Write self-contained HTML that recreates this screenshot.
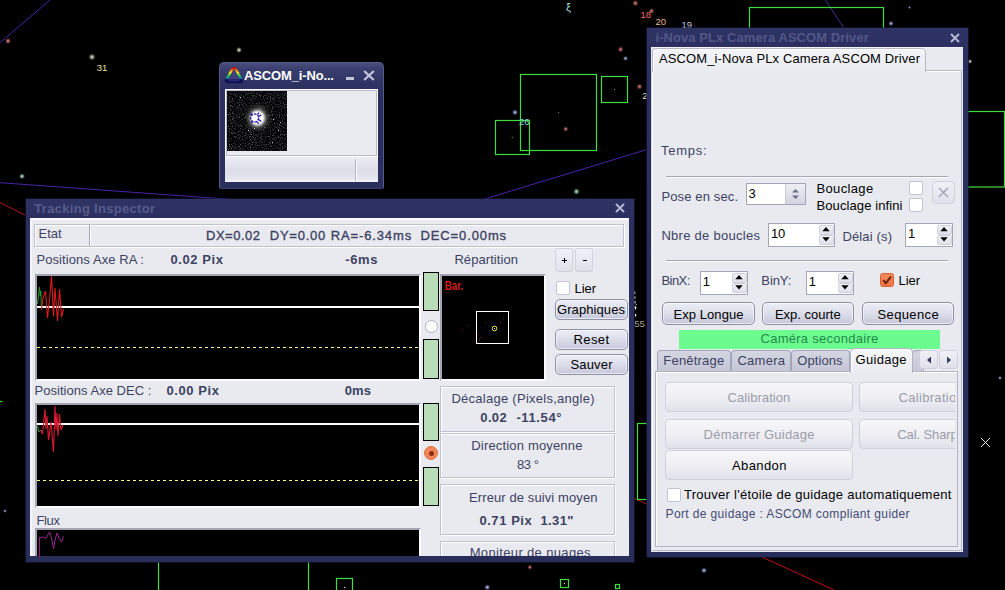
<!DOCTYPE html>
<html><head><meta charset="utf-8"><title>Tracking</title>
<style>
html,body{margin:0;padding:0;background:#000;}
body{width:1005px;height:590px;overflow:hidden;position:relative;font-family:"Liberation Sans",sans-serif;font-size:13px;line-height:13px;}
#root{position:absolute;left:0;top:0;width:1005px;height:590px;overflow:hidden;background:#000;}
#root div,#root svg{position:absolute;box-sizing:border-box;}
.t{white-space:nowrap;font-size:13px;line-height:13px;}
.win{background:#2b2f5e;box-shadow:0 0 0 1px rgba(26,28,66,.55);}
.cont{background:#e8eaf0;}
.blk{background:#000;}
.gbar{background:#b9dcb9;border:1px solid #000;}
.btn{border:1px solid #8e90a6;border-radius:5px;background:linear-gradient(#eceef6,#d9dbe8 55%,#c6c8da);box-shadow:inset 0 0 0 1px rgba(255,255,255,.6);}
.btnd{border:1px solid #cfd0da;border-radius:4px;background:linear-gradient(#f7f7fa,#ededf2 60%,#e0e1e9);}
.sbtn{border:1px solid #cfd1dd;border-radius:3px;background:linear-gradient(#f0f1f6,#dfe0ea);}
.chk{background:#fff;border:1px solid #c2c4d2;border-radius:2px;}
.inp{background:#fff;border:1px solid #a3a5b8;}
.grp{border:1px solid #bfc1cd;box-shadow:inset 1px 1px 0 #fff, 1px 1px 0 #fff;}
.sep{height:2px;border-top:1px solid #a2a5b6;border-bottom:1px solid #fff;}
.tab{border:1px solid #a3a5ba;border-bottom:none;border-radius:4px 4px 0 0;background:linear-gradient(#d4d6e2,#c4c6d6);}

</style></head>
<body>
<div id="root">
<!-- ============ star chart background ============ -->
<svg id="bg" width="1005" height="590" viewBox="0 0 1005 590" style="left:0;top:0">
 <defs>
  <radialGradient id="sW"><stop offset="0" stop-color="#bcbcb2"/><stop offset=".18" stop-color="#bcbcb2"/><stop offset=".45" stop-color="#66665e"/><stop offset=".72" stop-color="#242420" stop-opacity=".6"/><stop offset="1" stop-color="#000" stop-opacity="0"/></radialGradient>
  <radialGradient id="sR"><stop offset="0" stop-color="#b86a6a"/><stop offset=".18" stop-color="#b86a6a"/><stop offset=".45" stop-color="#623636"/><stop offset=".72" stop-color="#241212" stop-opacity=".6"/><stop offset="1" stop-color="#000" stop-opacity="0"/></radialGradient>
  <radialGradient id="sB"><stop offset="0" stop-color="#a0a4c8"/><stop offset=".18" stop-color="#a0a4c8"/><stop offset=".45" stop-color="#505474"/><stop offset=".72" stop-color="#1c1e30" stop-opacity=".6"/><stop offset="1" stop-color="#000" stop-opacity="0"/></radialGradient>
  <radialGradient id="sG"><stop offset="0" stop-color="#a4c4b0"/><stop offset=".18" stop-color="#a4c4b0"/><stop offset=".45" stop-color="#4c6e5c"/><stop offset=".72" stop-color="#1a2820" stop-opacity=".6"/><stop offset="1" stop-color="#000" stop-opacity="0"/></radialGradient>
 </defs>
 <g fill="none" stroke-width="1">
  <line x1="0" y1="42.6" x2="50" y2="0" stroke="#4a22a8"/>
  <line x1="0" y1="182.7" x2="420" y2="213" stroke="#4a22a8"/>
  <line x1="430" y1="215.7" x2="646" y2="149.8" stroke="#4a22a8"/>
  <line x1="825.4" y1="0" x2="843.3" y2="27" stroke="#4a2a90"/>
  <line x1="0" y1="202.6" x2="25" y2="215" stroke="#b01818"/>
  <line x1="600" y1="482.6" x2="834" y2="590" stroke="#c01010"/>
 </g>
 <g fill="none" stroke="#3fdc3f" stroke-width="1.2">
  <rect x="520.5" y="74.5" width="76" height="76"/>
  <rect x="601.5" y="76.5" width="26" height="26"/>
  <rect x="495.5" y="120.5" width="34" height="34"/>
  <rect x="749.5" y="7.5" width="134" height="60"/>
  <rect x="960.5" y="111.5" width="44" height="75.5"/>
  <rect x="637.5" y="423.5" width="60" height="76"/>
  <line x1="0" y1="401.5" x2="2.5" y2="401.5"/>
  <line x1="158.5" y1="560" x2="158.5" y2="590"/>
  <line x1="308.5" y1="560" x2="308.5" y2="590"/>
  <rect x="336.5" y="578.5" width="16" height="16"/>
  <rect x="560.5" y="579.5" width="8" height="8"/>
  <rect x="615.5" y="584.5" width="4" height="4"/>
 </g>
 <!-- stars -->
 <circle cx="8" cy="41" r="3.9" fill="url(#sR)"/>
 <circle cx="92" cy="57" r="4.3" fill="url(#sW)"/>
 <circle cx="239" cy="50" r="3.7" fill="url(#sW)"/>
 <circle cx="22" cy="176.3" r="3.7" fill="url(#sG)"/>
 <circle cx="635.4" cy="3.2" r="3.9" fill="url(#sR)"/>
 <circle cx="651.5" cy="11" r="3.7" fill="url(#sR)"/>
 <circle cx="620.6" cy="49.4" r="3.7" fill="url(#sR)"/>
 <circle cx="625.5" cy="58.4" r="3.1" fill="url(#sB)"/>
 <circle cx="639.5" cy="86.6" r="3.7" fill="url(#sR)"/>
 <circle cx="515" cy="112.4" r="3.7" fill="url(#sB)"/>
 <circle cx="565.7" cy="129" r="3.3" fill="url(#sR)"/>
 <circle cx="576.5" cy="191.5" r="4.1" fill="url(#sG)"/>
 <circle cx="891" cy="23.5" r="3.3" fill="url(#sB)"/>
 <circle cx="970" cy="61.4" r="2.9" fill="url(#sW)"/>
 <circle cx="529.8" cy="567.2" r="3.1" fill="url(#sR)"/>
 <circle cx="487.3" cy="587.3" r="3.7" fill="url(#sB)"/>
 <circle cx="704" cy="570.4" r="3.7" fill="url(#sB)"/>
 <circle cx="1000" cy="378" r="2.4" fill="url(#sB)"/>
 <circle cx="5" cy="511" r="2.2" fill="url(#sB)"/>
 <circle cx="909.5" cy="7.5" r="1.8" fill="url(#sB)"/>
 <circle cx="564.5" cy="583.5" r=".7" fill="#ddd"/>
 <circle cx="344.5" cy="587.5" r=".7" fill="#ddd"/>
 <circle cx="558.6" cy="112.5" r=".6" fill="#7a7"/>
 <circle cx="512.2" cy="137.3" r=".6" fill="#7a7"/>
 <circle cx="614.5" cy="89.5" r=".6" fill="#aaa"/>
 <g font-family="Liberation Sans, sans-serif" font-size="9.5">
  <text x="96.8" y="71" fill="#e0e09a">31</text>
  <text x="640.5" y="17.5" fill="#f06868">18</text>
  <text x="655.5" y="25" fill="#e8b49a">20</text>
  <text x="681.5" y="27.5" fill="#c4c4ee">19</text>
  <text x="519" y="125" fill="#86d6d6">26</text>
  <text x="566" y="11" fill="#a6e2e2" font-size="11">ξ</text>
  <text x="642.3" y="99" fill="#e8d8c0">2</text>
  <text x="634.3" y="327" fill="#aaa292">55</text>
 </g>
 <path d="M634.6 291.5 L635.2 310 L636.4 304 M635.6 314 L635.6 316.5" fill="none" stroke="#fff" stroke-width="1.2" stroke-dasharray="2.4 2.4"/>
 <path d="M981 438 l9 9 m0 -9 l-9 9" stroke="#e4e4e4" stroke-width="1" fill="none"/>
</svg>

<!-- ============ small ASCOM preview window ============ -->
<div id="sw" style="left:219px;top:62px;width:165px;height:127px;border-radius:5px 5px 2px 2px;background:linear-gradient(#4a4f80 0,#3a3f70 6px,#2e3263 22px,#2b2f5e 30px);border:1px solid #565b8a;border-bottom-color:#3a3e6c;">
 <!-- icon -->
 <svg width="22" height="20" viewBox="0 0 22 20" style="left:2.5px;top:2.7px">
  <defs><linearGradient id="rb" gradientUnits="userSpaceOnUse" x1="0" y1="14" x2="0" y2="1"><stop offset="0" stop-color="#1c2c9c"/><stop offset=".14" stop-color="#1488a8"/><stop offset=".34" stop-color="#22c444"/><stop offset=".56" stop-color="#ece424"/><stop offset=".74" stop-color="#f48a14"/><stop offset=".9" stop-color="#d41414"/><stop offset="1" stop-color="#b40a0a"/></linearGradient></defs>
  <path d="M5.8 13.4 L11 4.4 L16.2 13.4 Z" fill="#5a4aa0" fill-opacity=".4"/>
  <path d="M3.6 13.6 L9.2 3.2 Q11 0.9 12.8 3.2 L18.4 13.6" fill="none" stroke="url(#rb)" stroke-width="2.5" stroke-linejoin="round"/>
  <path d="M1.3 13.3 L20.7 13.3 L19.2 17.3 L2.8 17.3 Z" fill="#0e1254"/>
  <path d="M5.2 13.3 L16.8 13.3 L16.2 15.3 L5.8 15.3 Z" fill="#3a2e86" fill-opacity=".75"/>
 </svg>
 <!-- min / close -->
 <div style="left:126px;top:14px;width:8px;height:3px;background:#c4c6de;"></div>
 <svg width="12" height="11" viewBox="0 0 12 11" style="left:143px;top:7px"><path d="M1.2 1 L10.8 10 M10.8 1 L1.2 10" stroke="#c4c6de" stroke-width="2.2" fill="none"/></svg>
 <!-- image panel -->
 <div style="left:5px;top:26px;width:153px;height:68px;background:#e9ebf0;border:1px solid #fff;box-shadow:inset 0 0 0 1px #b9bbd0;"></div>
 <svg width="60" height="60" viewBox="0 0 60 60" style="left:7px;top:28px">
  <defs>
   <filter id="nz" x="0" y="0" width="100%" height="100%" color-interpolation-filters="sRGB"><feTurbulence type="fractalNoise" baseFrequency="0.9" numOctaves="2" seed="7"/><feColorMatrix type="matrix" values="1.2 0 0 0 -0.585  1.2 0 0 0 -0.585  1.2 0 0 0 -0.575  0 0 0 0 1"/></filter>
   <radialGradient id="glow"><stop offset="0" stop-color="#fff"/><stop offset=".31" stop-color="#fff"/><stop offset=".4" stop-color="#d0d0d0" stop-opacity=".9"/><stop offset=".52" stop-color="#777" stop-opacity=".6"/><stop offset=".7" stop-color="#3a3a3a" stop-opacity=".35"/><stop offset="1" stop-color="#000" stop-opacity="0"/></radialGradient>
  </defs>
  <rect width="60" height="60" fill="#060606"/>
  <rect width="60" height="60" filter="url(#nz)"/>
  <ellipse cx="30.5" cy="27" rx="17" ry="18" fill="url(#glow)"/>
  <g fill="#ccc"><rect x="13" y="6" width="1" height="1"/><rect x="21" y="39" width="1" height="1"/><rect x="27" y="37" width="1" height="1"/><rect x="53" y="31" width="1" height="1"/><rect x="51" y="39" width="1" height="1"/><rect x="46" y="28" width="1" height="1"/><rect x="45" y="51" width="1" height="1"/></g>
  <g stroke="#2414a8" stroke-width="1.3" fill="none">
   <circle cx="27.6" cy="27" r="4" stroke-dasharray="2.4 1.2"/>
   <path d="M25 24 l-1.6 -1.8 M30.4 23.6 l1.6 -2 M31.6 28.5 l2.6 2 M31.6 25.5 l2.6 -1.6 M25.4 30.4 l-1.4 1.6 M30 30.6 l1.6 2.4"/>
  </g>
 </svg>
 <!-- status bar -->
 <div style="left:5px;top:94px;width:153px;height:25px;background:linear-gradient(#edeef4,#dcdde7 55%,#e4e5ed 85%,#f3f3f8);"></div>
 <div style="left:135px;top:96px;width:1px;height:22px;background:#b4b6c6;"></div>
 <div style="left:136px;top:96px;width:1px;height:22px;background:#f8f8fc;"></div>
</div>

<!-- ============ Tracking Inspector window ============ -->
<div id="ti" class="win" style="left:26px;top:199px;width:608px;height:363px;background:linear-gradient(#2e3364,#2c3060 19px,#292d5a);">
 <svg width="10" height="10" viewBox="0 0 10 10" style="left:589px;top:4px"><path d="M1 1 L9 9 M9 1 L1 9" stroke="#b4b6d2" stroke-width="2" fill="none"/></svg>
 <div class="cont" style="left:4px;top:19px;width:599px;height:338px;border-top:2px solid #fafafc;border-left:2px solid #f6f6fa;overflow:hidden;">
  <!-- coordinates inside: origin (32,220) -->
 </div>
 <!-- origin (26,199) -->
 <div class="grp" style="left:8px;top:25px;width:590px;height:23px;"></div>
 <div style="left:63px;top:26px;width:1px;height:21px;background:#a4a7b8;"></div>
 <div style="left:64px;top:26px;width:1px;height:21px;background:#fff;"></div>

 <!-- RA graph -->
 <div style="left:9px;top:75px;width:386px;height:107px;background:#000;border:2px solid #a2a4b2;border-right:2px solid #fbfbfd;border-bottom:2px solid #fbfbfd;"></div>
 <svg width="382" height="104" viewBox="37 276 382 104" style="left:11px;top:77px">
  <rect x="37" y="306" width="382" height="2" fill="#fff"/>
  <polyline points="37.5,304 39.5,287 40.3,296 40.8,291 41.3,306" fill="none" stroke="#2a9a3a" stroke-width="1"/>
  <polyline points="41.5,310 43,298 45.5,291 47.5,318 49.5,300 51.5,276 53.5,316 55,288 57.5,321 59.5,289 61,310 61.5,317 63.5,309" fill="none" stroke="#dc1a1a" stroke-width="1.1"/>
  <line x1="37" y1="347.5" x2="419" y2="347.5" stroke="#ffff88" stroke-width="1" stroke-dasharray="3 3"/>
 </svg>
 <!-- bars + radio RA -->
 <div class="gbar" style="left:397px;top:73px;width:16px;height:39px;"></div>
 <div class="gbar" style="left:397px;top:140px;width:16px;height:40px;"></div>
 <div style="left:398.5px;top:120.5px;width:13px;height:13px;border-radius:50%;background:#fff;border:1px solid #b4b4c4;"></div>
 <!-- repartition -->
 <div style="left:414px;top:75px;width:106px;height:107px;background:#000;border:2px solid #a2a4b2;border-right:2px solid #fbfbfd;border-bottom:2px solid #fbfbfd;"></div>
 <svg width="103" height="104" viewBox="442 276 103 104" style="left:416px;top:77px">
  <rect x="476.5" y="311.5" width="32" height="32" fill="none" stroke="#fff" stroke-width="1"/>
  <circle cx="494.5" cy="328.5" r="2.3" fill="none" stroke="#e8e860" stroke-width="1"/>
  <rect x="494" y="328" width="1" height="1" fill="#e8e860"/>
  <g fill="#7a1818"><rect x="468" y="325" width="1" height="1"/><rect x="485" y="322" width="1" height="1"/><rect x="480" y="337" width="1" height="1"/><rect x="478" y="334" width="1" height="1"/><rect x="462" y="329" width="1" height="1"/><rect x="503" y="318" width="1" height="1"/><rect x="500" y="322" width="1" height="1"/><rect x="479" y="339" width="1" height="1"/></g>
 </svg>
 <div class="t" style="left:419px;top:80.7px;color:#e01818;font-weight:bold;font-size:12px;transform:scaleX(.82);transform-origin:0 0;">Bar.</div>
 <!-- + - buttons -->
 <div class="sbtn" style="left:529px;top:49px;width:18px;height:24px;"></div>
 <div class="sbtn" style="left:549px;top:49px;width:18px;height:24px;"></div>
 <div style="left:536px;top:61px;width:5px;height:1px;background:#000;"></div>
 <div style="left:538px;top:59px;width:1px;height:5px;background:#000;"></div>
 <div style="left:557px;top:61px;width:4px;height:1px;background:#000;"></div>
 <div class="chk" style="left:530px;top:82px;width:14px;height:14px;"></div>
 <div class="btn" style="left:529px;top:100px;width:73px;height:21px;"></div>
 <div class="btn" style="left:529px;top:130px;width:73px;height:21px;"></div>
 <div class="btn" style="left:529px;top:155px;width:73px;height:21px;"></div>

 <!-- DEC graph -->
 <div style="left:9px;top:204px;width:386px;height:105px;background:#000;border:2px solid #a2a4b2;border-right:2px solid #fbfbfd;border-bottom:2px solid #fbfbfd;"></div>
 <svg width="382" height="102" viewBox="37 405 382 102" style="left:11px;top:206px">
  <rect x="37" y="423" width="382" height="2" fill="#fff"/>
  <polyline points="37.5,426 39,432 41,430" fill="none" stroke="#2a9a3a" stroke-width="1"/>
  <polyline points="41,430 42.5,434 45,409 46,429 47,416 48.5,440 51,422 53.5,452 55,406 56,430 57,413 58,436 59.5,414 61,430 63,425" fill="none" stroke="#dc1a30" stroke-width="1.1"/>
  <line x1="37" y1="480.5" x2="419" y2="480.5" stroke="#ffff88" stroke-width="1" stroke-dasharray="3 3"/>
 </svg>
 <div class="gbar" style="left:397px;top:204px;width:16px;height:38px;"></div>
 <div class="gbar" style="left:397px;top:268px;width:16px;height:39px;"></div>
 <div style="left:398px;top:247px;width:14px;height:14px;border-radius:50%;background:#f0845a;border:1px solid #e0703c;"></div>
 <div style="left:402.5px;top:251.5px;width:5px;height:5px;border-radius:50%;background:#8a2c10;"></div>

 <!-- info boxes -->
 <div class="grp" style="left:414px;top:187px;width:175px;height:46px;"></div>
 <div class="grp" style="left:414px;top:234px;width:175px;height:45px;"></div>
 <div class="grp" style="left:414px;top:285px;width:175px;height:51px;"></div>
 <div style="left:414px;top:342px;width:176px;height:15px;overflow:hidden;">
  <div class="grp" style="left:0;top:0;width:175px;height:40px;"></div>
  <div class="t" id="moni" style="left:29.7px;top:5px;color:#3e4262;letter-spacing:.35px;">Moniteur de nuages</div>
 </div>

 <!-- Flux graph -->
 <div style="left:9px;top:329px;width:386px;height:28px;background:#000;border:2px solid #a2a4b2;border-right:2px solid #fbfbfd;border-bottom:none;"></div>
 <svg width="382" height="32" viewBox="37 530 382 32" style="left:11px;top:331px;height:27px" preserveAspectRatio="xMinYMin slice">
  <polyline points="39.3,560 39.5,537.5 43,537 46,538.5 49.5,532 51.5,538 53.5,549 55,540 57,533 59,538 61.5,542 63.5,536.5" fill="none" stroke="#98248e" stroke-width="1"/>
 </svg>
</div>

<!-- ============ i-Nova camera window ============ -->
<div id="rw" class="win" style="left:647px;top:28px;width:321px;height:529px;background:linear-gradient(#2e3364,#2c3060 19px,#292d5a);">
 <!-- origin (647,28) -->
 <svg width="10" height="10" viewBox="0 0 10 10" style="left:302.5px;top:4.5px"><path d="M1 1 L9 9 M9 1 L1 9" stroke="#b4b6d2" stroke-width="2" fill="none"/></svg>
 <div class="cont" style="left:4px;top:19px;width:312px;height:505px;border-top:1px solid #f4f4f8;"></div>
 <!-- outer tab page -->
 <div style="left:4px;top:42px;width:311px;height:481px;border:1px solid #b6b8c8;border-left-color:#d4d6e0;box-shadow:inset 1px 1px 0 #fff;background:#e8eaf0;"></div>
 <div style="left:5px;top:20px;width:274px;height:24px;border:1px solid #b6b8c8;border-bottom:none;border-radius:4px 5px 0 0;background:linear-gradient(#f4f5f9,#e9ebf1);box-shadow:inset 1px 1px 0 #fff;"></div>

 <div class="sep" style="left:19px;top:148px;width:282px;"></div>
 <!-- pose -->
 <div class="inp" style="left:99px;top:155px;width:60px;height:22px;"></div>
 <div style="left:138px;top:156px;width:20px;height:20px;background:linear-gradient(#eeeff5,#d2d4e2);border-left:1px solid #c9cbd8;"></div>
 <svg width="9" height="12" viewBox="0 0 9 12" style="left:144px;top:160px"><path d="M1 4.5 L4.5 1 L8 4.5 Z M1 7.5 L4.5 11 L8 7.5 Z" fill="#6c6f86"/></svg>
 <div class="chk" style="left:262px;top:153px;width:14px;height:14px;"></div>
 <div class="chk" style="left:262px;top:170px;width:14px;height:14px;"></div>
 <div class="sbtn" style="left:285px;top:153px;width:23px;height:23px;border-radius:4px;"></div>
 <svg width="11" height="11" viewBox="0 0 11 11" style="left:291px;top:159px"><path d="M1 1 L10 10 M10 1 L1 10" stroke="#9a9cb0" stroke-width="1.1" fill="none"/></svg>
 <!-- nbre -->
 <div class="inp" style="left:121px;top:195px;width:67px;height:24px;"></div>
 <div class="sbtn" style="left:172px;top:197px;width:15px;height:10px;border-radius:2px;"></div>
 <div class="sbtn" style="left:172px;top:207px;width:15px;height:10px;border-radius:2px;"></div>
 <svg width="8" height="15" viewBox="0 0 8 15" style="left:174.5px;top:199.0px"><path d="M0.3 4.3 L4 0.1 L7.7 4.3 Z M0.3 10.2 L4 14.4 L7.7 10.2 Z" fill="#000"/></svg>
 <div class="inp" style="left:258px;top:195px;width:48px;height:24px;"></div>
 <div class="sbtn" style="left:290px;top:197px;width:15px;height:10px;border-radius:2px;"></div>
 <div class="sbtn" style="left:290px;top:207px;width:15px;height:10px;border-radius:2px;"></div>
 <svg width="8" height="15" viewBox="0 0 8 15" style="left:292.5px;top:199.0px"><path d="M0.3 4.3 L4 0.1 L7.7 4.3 Z M0.3 10.2 L4 14.4 L7.7 10.2 Z" fill="#000"/></svg>
 <div class="sep" style="left:19px;top:232px;width:282px;"></div>
 <!-- bin -->
 <div class="inp" style="left:53px;top:243px;width:48px;height:24px;"></div>
 <div class="sbtn" style="left:85px;top:245px;width:15px;height:10px;border-radius:2px;"></div>
 <div class="sbtn" style="left:85px;top:255px;width:15px;height:10px;border-radius:2px;"></div>
 <svg width="8" height="15" viewBox="0 0 8 15" style="left:87.5px;top:247.0px"><path d="M0.3 4.3 L4 0.1 L7.7 4.3 Z M0.3 10.2 L4 14.4 L7.7 10.2 Z" fill="#000"/></svg>
 <div class="inp" style="left:159px;top:243px;width:48px;height:24px;"></div>
 <div class="sbtn" style="left:191px;top:245px;width:15px;height:10px;border-radius:2px;"></div>
 <div class="sbtn" style="left:191px;top:255px;width:15px;height:10px;border-radius:2px;"></div>
 <svg width="8" height="15" viewBox="0 0 8 15" style="left:193.5px;top:247.0px"><path d="M0.3 4.3 L4 0.1 L7.7 4.3 Z M0.3 10.2 L4 14.4 L7.7 10.2 Z" fill="#000"/></svg>
 <div style="left:233px;top:245px;width:14px;height:14px;border-radius:2.5px;background:linear-gradient(#f48a5e,#ee7446);border:1px solid #d8622e;"></div>
 <svg width="12" height="12" viewBox="0 0 12 12" style="left:234px;top:246px"><path d="M2.2 6.2 L4.8 9.2 L10 2.6" stroke="#6a2408" stroke-width="2" fill="none"/></svg>
 <!-- buttons -->
 <div class="btn" style="left:14.5px;top:274px;width:93px;height:23px;"></div>
 <div class="btn" style="left:115px;top:274px;width:92px;height:23px;"></div>
 <div class="btn" style="left:215px;top:274px;width:92px;height:23px;"></div>
 <div style="left:32px;top:302px;width:261px;height:19px;background:#6cfb8e;"></div>
 <!-- inner tabs -->
 <div class="tab" style="left:10px;top:322px;width:74px;height:22px;"></div>
 <div class="tab" style="left:84px;top:322px;width:60px;height:22px;"></div>
 <div class="tab" style="left:144px;top:322px;width:59px;height:22px;"></div>
 <div class="tab" style="left:265px;top:322px;width:12px;height:22px;"></div>
 <div style="left:8px;top:343px;width:303px;height:176px;border:1px solid #b2b4c6;box-shadow:inset 1px 1px 0 #fff;background:#e8eaf0;"></div>
 <div style="left:203px;top:320px;width:63px;height:25px;border:1px solid #b2b4c6;border-bottom:none;border-radius:5px 5px 0 0;background:linear-gradient(#f6f7fa,#e9ebf1);box-shadow:inset 1px 1px 0 #fff;"></div>
 <div class="sbtn" style="left:272px;top:322px;width:19px;height:19px;"></div>
 <div class="sbtn" style="left:292px;top:322px;width:19px;height:19px;"></div>
 <svg width="6" height="8" viewBox="0 0 6 8" style="left:279px;top:328px"><path d="M5 0.5 L1 4 L5 7.5 Z" fill="#34385a"/></svg>
 <svg width="6" height="8" viewBox="0 0 6 8" style="left:299px;top:328px"><path d="M1 0.5 L5 4 L1 7.5 Z" fill="#34385a"/></svg>
 <!-- inner panel content, clipped at x=955 -->
 <div style="left:10px;top:346px;width:298px;height:170px;overflow:hidden;">
  <!-- origin (657,374) -->
  <div class="btnd" style="left:8px;top:7.5px;width:188px;height:30px;"></div>
  <div class="btnd" style="left:202px;top:7.5px;width:188px;height:30px;"></div>
  <div class="btnd" style="left:8px;top:44.5px;width:188px;height:30px;"></div>
  <div class="btnd" style="left:202px;top:44.5px;width:188px;height:30px;"></div>
  <div class="btnd" style="left:8px;top:76px;width:188px;height:30px;"></div>
  <div class="chk" style="left:9.5px;top:113.5px;width:14px;height:14px;"></div>
  <div class="t" style="left:241.6px;top:17px;color:#9a9caa;letter-spacing:.3px;">Calibration</div>
  <div class="t" style="left:240.3px;top:54px;color:#9a9caa;letter-spacing:-.1px;">Cal. Sharp</div>
 </div>
</div>

<div class="t" style="left:244.0px;top:69.0px;color:#ffffff;font-weight:bold;letter-spacing:-0.145px;">ASCOM_i-No...</div>
<div class="t" style="left:34.3px;top:202.0px;color:#565c8c;font-weight:bold;letter-spacing:0.300px;">Tracking Inspector</div>
<div class="t" style="left:38.5px;top:227.0px;color:#3e4262;">Etat</div>
<div class="t" style="left:206.0px;top:229.0px;color:#3e4262;letter-spacing:0.508px;-webkit-text-stroke:0.35px #3e4262;">DX=0.02</div>
<div class="t" style="left:269.8px;top:229.0px;color:#3e4262;letter-spacing:0.758px;-webkit-text-stroke:0.35px #3e4262;">DY=0.00</div>
<div class="t" style="left:330.7px;top:229.0px;color:#3e4262;letter-spacing:0.875px;-webkit-text-stroke:0.35px #3e4262;">RA=-6.34ms</div>
<div class="t" style="left:420.5px;top:229.0px;color:#3e4262;letter-spacing:0.881px;-webkit-text-stroke:0.35px #3e4262;">DEC=0.00ms</div>
<div class="t" style="left:36.5px;top:253.0px;color:#3e4262;letter-spacing:0.074px;">Positions Axe RA :</div>
<div class="t" style="left:170.5px;top:253.0px;color:#3e4262;font-weight:bold;letter-spacing:0.580px;">0.02 Pix</div>
<div class="t" style="left:345.3px;top:253.0px;color:#3e4262;font-weight:bold;letter-spacing:0.580px;">-6ms</div>
<div class="t" style="left:454.4px;top:253.0px;color:#3e4262;letter-spacing:0.073px;">Répartition</div>
<div class="t" style="left:574.5px;top:282.0px;color:#000;">Lier</div>
<div class="t" style="left:557.0px;top:303.0px;color:#000;letter-spacing:0.087px;">Graphiques</div>
<div class="t" style="left:573.5px;top:333.0px;color:#000;letter-spacing:0.383px;">Reset</div>
<div class="t" style="left:570.5px;top:358.0px;color:#000;letter-spacing:0.159px;">Sauver</div>
<div class="t" style="left:34.5px;top:384.0px;color:#3e4262;letter-spacing:0.032px;">Positions Axe DEC :</div>
<div class="t" style="left:166.5px;top:384.0px;color:#3e4262;font-weight:bold;letter-spacing:0.580px;">0.00 Pix</div>
<div class="t" style="left:344.8px;top:384.0px;color:#3e4262;font-weight:bold;letter-spacing:0.034px;">0ms</div>
<div class="t" style="left:451.4px;top:392.0px;color:#3e4262;letter-spacing:0.268px;">Décalage (Pixels,angle)</div>
<div class="t" style="left:480.3px;top:411.0px;color:#3e4262;font-weight:bold;letter-spacing:0.362px;">0.02</div>
<div class="t" style="left:516.4px;top:411.0px;color:#3e4262;font-weight:bold;letter-spacing:0.626px;">-11.54°</div>
<div class="t" style="left:471.3px;top:439.0px;color:#3e4262;letter-spacing:0.169px;">Direction moyenne</div>
<div class="t" style="left:517.0px;top:457.5px;color:#3e4262;letter-spacing:-0.427px;">83 °</div>
<div class="t" style="left:469.0px;top:491.0px;color:#3e4262;letter-spacing:0.102px;">Erreur de suivi moyen</div>
<div class="t" style="left:479.4px;top:514.0px;color:#3e4262;font-weight:bold;letter-spacing:0.566px;">0.71 Pix</div>
<div class="t" style="left:540.5px;top:514.0px;color:#3e4262;font-weight:bold;letter-spacing:0.358px;">1.31"</div>
<div class="t" style="left:36.5px;top:514.0px;color:#3e4262;letter-spacing:-0.354px;">Flux</div>
<div class="t" style="left:655.5px;top:31.0px;color:#525888;font-weight:bold;letter-spacing:0.072px;">i-Nova PLx Camera ASCOM Driver</div>
<div class="t" style="left:659.0px;top:51.5px;color:#000;letter-spacing:0.109px;">ASCOM_i-Nova PLx Camera ASCOM Driver</div>
<div class="t" style="left:661.0px;top:144.0px;color:#3e4262;letter-spacing:0.719px;">Temps:</div>
<div class="t" style="left:661.4px;top:189.5px;color:#3e4262;letter-spacing:0.131px;">Pose en sec.</div>
<div class="t" style="left:748.5px;top:187.0px;color:#000;">3</div>
<div class="t" style="left:816.5px;top:182.0px;color:#000;letter-spacing:0.354px;">Bouclage</div>
<div class="t" style="left:816.5px;top:199.0px;color:#000;letter-spacing:0.103px;">Bouclage infini</div>
<div class="t" style="left:661.4px;top:229.0px;color:#3e4262;letter-spacing:0.281px;">Nbre de boucles</div>
<div class="t" style="left:770.9px;top:227.0px;color:#000;">10</div>
<div class="t" style="left:842.4px;top:229.5px;color:#3e4262;letter-spacing:0.149px;">Délai (s)</div>
<div class="t" style="left:908.0px;top:227.0px;color:#000;">1</div>
<div class="t" style="left:661.4px;top:274.0px;color:#3e4262;letter-spacing:-0.520px;">BinX:</div>
<div class="t" style="left:702.7px;top:274.5px;color:#000;">1</div>
<div class="t" style="left:761.3px;top:274.0px;color:#3e4262;letter-spacing:-0.090px;">BinY:</div>
<div class="t" style="left:808.8px;top:274.5px;color:#000;">1</div>
<div class="t" style="left:898.6px;top:274.3px;color:#000;letter-spacing:-0.096px;">Lier</div>
<div class="t" style="left:673.4px;top:308.0px;color:#000;letter-spacing:0.077px;">Exp Longue</div>
<div class="t" style="left:774.9px;top:308.0px;color:#000;letter-spacing:0.003px;">Exp. courte</div>
<div class="t" style="left:877.5px;top:308.0px;color:#000;letter-spacing:0.377px;">Sequence</div>
<div class="t" style="left:760.5px;top:331.7px;color:#1f8a4a;letter-spacing:0.272px;">Caméra secondaire</div>
<div class="t" style="left:663.3px;top:353.5px;color:#3e4262;letter-spacing:0.204px;">Fenêtrage</div>
<div class="t" style="left:737.4px;top:353.5px;color:#3e4262;letter-spacing:0.270px;">Camera</div>
<div class="t" style="left:797.3px;top:353.5px;color:#3e4262;letter-spacing:0.065px;">Options</div>
<div class="t" style="left:855.5px;top:353.0px;color:#000;letter-spacing:0.324px;">Guidage</div>
<div class="t" style="left:727.5px;top:391.0px;color:#9a9caa;letter-spacing:0.064px;">Calibration</div>
<div class="t" style="left:703.6px;top:428.0px;color:#9a9caa;letter-spacing:0.216px;">Démarrer Guidage</div>
<div class="t" style="left:731.9px;top:459.2px;color:#000;letter-spacing:0.423px;">Abandon</div>
<div class="t" style="left:684.0px;top:487.7px;color:#000;letter-spacing:0.260px;">Trouver l'étoile de guidage automatiquement</div>
<div class="t" style="left:665.5px;top:507.5px;color:#464a72;font-size:12px;line-height:12px;letter-spacing:0.373px;">Port de guidage : ASCOM compliant guider</div>
</div>

</body></html>
